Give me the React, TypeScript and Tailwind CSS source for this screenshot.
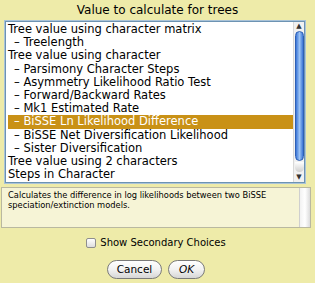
const rows = [
  { label: "Tree value using character matrix", sub: false },
  { label: "Treelength", sub: true },
  { label: "Tree value using character", sub: false },
  { label: "Parsimony Character Steps", sub: true },
  { label: "Asymmetry Likelihood Ratio Test", sub: true },
  { label: "Forward/Backward Rates", sub: true },
  { label: "Mk1 Estimated Rate", sub: true },
  { label: "BiSSE Ln Likelihood Difference", sub: true, selected: true },
  { label: "BiSSE Net Diversification Likelihood", sub: true },
  { label: "Sister Diversification", sub: true },
  { label: "Tree value using 2 characters", sub: false },
  { label: "Steps in Character", sub: false },
]

export default function App() {
  return (
    <div
      className="w-[315px] h-[283px] bg-[#eeeba9] flex flex-col px-[5px] text-black"
      style={{ fontFamily: '"DejaVu Sans", sans-serif' }}
    >
      {/* Title */}
      <div className="h-[21px] pt-[2px] text-center text-[12px] leading-[16px]">Value to calculate for trees</div>

      {/* List box */}
      <div className="h-[162px] w-[300px] flex border border-[#6d93b3] shadow-[0_0_0_1px_#a9c3d8] bg-white">
        <div className="flex-1 pl-[2px] pt-[1px] overflow-hidden">
          {rows.map((r, i) => (
            <div
              key={i}
              className={`h-[13.2px] leading-[13.2px] text-[11.5px] whitespace-nowrap ${
                r.selected ? "bg-[#c99116] text-white" : ""
              } ${r.sub ? "pl-[6px]" : ""}`}
            >
              {r.sub ? "– " : ""}
              {r.label}
            </div>
          ))}
        </div>
        {/* Scrollbar */}
        <div className="w-[11px] flex flex-col items-center bg-[#f1f1f1] border-l border-[#d8d8d8]">
          <div className="h-[9px] text-[7px] leading-[9px] text-[#333]">▲</div>
          <div className="w-[9px] flex-1 rounded-full bg-gradient-to-r from-[#3a74d6] via-[#9cc3f4] to-[#3a74d6] border border-[#2d5fb5]" />
          <div className="h-[10px] w-[9px] mt-[1px] rounded-b-full bg-gradient-to-b from-[#ffffff] to-[#cfcfcf]" />
          <div className="h-[10px] text-[7px] leading-[10px] text-[#333]">▼</div>
        </div>
      </div>

      {/* Description */}
      <div className="mt-[4px] -ml-[4px] h-[41px] w-[310px] flex border border-[#b9b8a0] bg-[#f6f4d6]">
        <div className="flex-1 pl-[6px] pt-[2px] text-[8.3px] leading-[10px]">
          Calculates the difference in log likelihoods between two BiSSE speciation/extinction models.
        </div>
        <div className="w-[11px] bg-gradient-to-r from-[#f2f2f2] via-[#ffffff] to-[#dcdcdc] border-l border-[#cfcfcf]" />
      </div>

      {/* Checkbox */}
      <div className="mt-[7px] flex items-center justify-center gap-[4px] pr-[3px]">
        <div className="w-[10px] h-[10px] rounded-[2px] border border-[#8e8e8e] bg-gradient-to-b from-white to-[#dedede]" />
        <span className="text-[10px] leading-[15px]">Show Secondary Choices</span>
      </div>

      {/* Buttons */}
      <div className="mt-[10px] flex justify-center gap-[6px] pr-[3px]">
        <button className="h-[19px] w-[55px] rounded-full border border-[#7a7a7a] bg-gradient-to-b from-white via-[#f2f2f2] to-[#d6d6d6] text-[10.5px] leading-[17px]">
          Cancel
        </button>
        <button className="h-[19px] w-[37px] rounded-full border border-[#7a7a7a] bg-gradient-to-b from-white via-[#f2f2f2] to-[#d6d6d6] text-[10.5px] leading-[17px] italic">
          OK
        </button>
      </div>
    </div>
  )
}
